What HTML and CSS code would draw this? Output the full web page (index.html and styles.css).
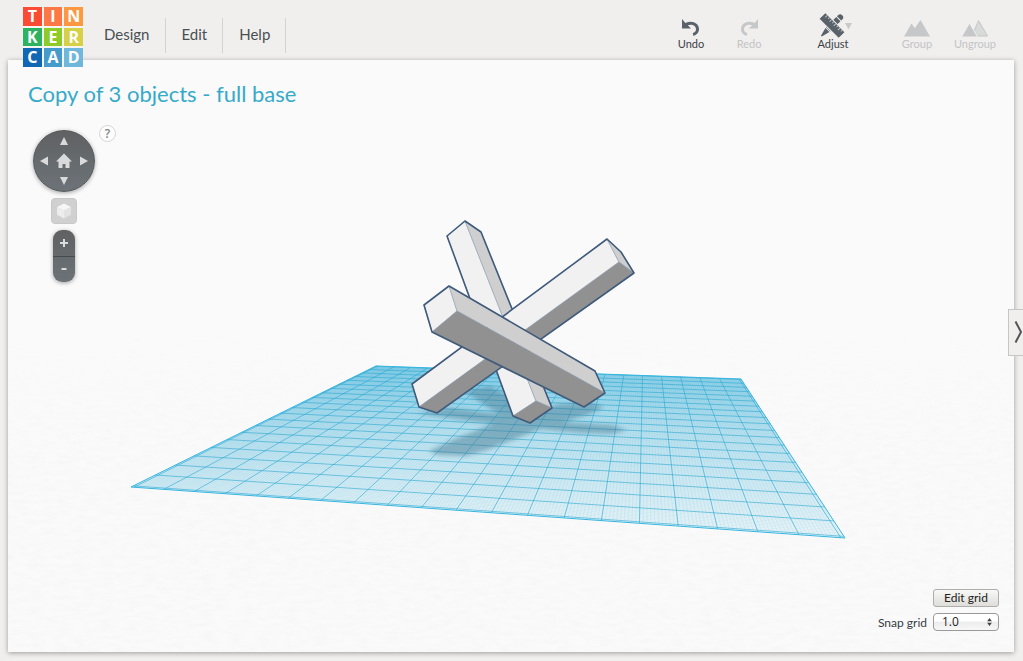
FILE: index.html
```html
<!DOCTYPE html>
<html lang="en">
<head>
<meta charset="utf-8">
<title>Tinkercad</title>
<link rel="stylesheet" href="styles.css">
</head>
<body>
<header class="topbar">
  <a class="logo" href="#" aria-label="Tinkercad">
    <span class="tile red">T</span><span class="tile coral">I</span><span class="tile orange">N</span>
    <span class="tile green">K</span><span class="tile lime">E</span><span class="tile yellow">R</span>
    <span class="tile navy">C</span><span class="tile blue">A</span><span class="tile sky">D</span>
  </a>
  <nav class="menu">
    <button type="button">Design</button>
    <button type="button">Edit</button>
    <button type="button">Help</button>
  </nav>
  <div class="tools">
    <div class="tool-group">
      <button type="button" class="tool">
        <svg width="34" height="25" viewBox="0 0 34 25"><path class="ink" d="M8 6v9.500h9l-3.200-3.300c4-1.500 8.200.3 8.200 4 0 1.800-1.300 3.500-3.200 3.900l.4 2.600c3.400-.5 5.800-3.300 5.800-6.700 0-6-7-9.200-13.600-6.100z"/></svg>
        Undo
      </button>
      <button type="button" class="tool" disabled>
        <svg width="34" height="25" viewBox="0 0 34 25"><path class="ink" d="M26 6v9.500h-9l3.200-3.300c-4-1.500-8.200.3-8.200 4 0 1.800 1.300 3.500 3.200 3.900l-.4 2.600c-3.400-.5-5.800-3.300-5.800-6.700 0-6 7-9.200 13.600-6.100z"/></svg>
        Redo
      </button>
    </div>
    <button type="button" class="tool">
      <svg width="40" height="25" viewBox="0 0 40 25">
        <g transform="translate(19 12.500) rotate(45)">
          <path class="ink" d="M-3-11.500a3 3 0 0 1 6 0v1.500h-6zM-3-9h6v14.500h-6zM-2.800 6.500h5.600L.6 15h-1.200z"/>
        </g>
        <g transform="translate(19 12.500) rotate(-45)">
          <path class="ink" stroke="#f0efee" d="M-4.500-14h9v28h-9z"/>
          <path class="ticks" d="M4-10.500H1M4-7.500H2M4-4.500H1M4-1.500H2M4 1.500H1M4 4.500H2M4 7.500H1M4 10.500H2"/>
        </g>
        <path fill="#c9c9c9" d="M32 10h7l-3.500 6.500z"/>
      </svg>
      Adjust
    </button>
    <div class="tool-group">
      <button type="button" class="tool" disabled>
        <svg width="34" height="25" viewBox="0 0 34 25"><path class="ink" d="M4 23.500l7.500-13 3.300 4.800L20.500 7l9.500 16.500z"/></svg>
        Group
      </button>
      <button type="button" class="tool" disabled>
        <svg width="34" height="25" viewBox="0 0 34 25"><path fill="#d8d9d9" stroke="#c5c7c8" d="M14 23L20.500 7.500l9 15.500z"/><path class="ink" stroke="#f0efee" d="M3.500 24l8-14 8 14z"/></svg>
        Ungroup
      </button>
    </div>
  </div>
</header>

<main class="workspace">
  <svg class="scene" viewBox="8 60 1006 592" preserveAspectRatio="xMidYMid slice" aria-hidden="true">
    <defs>
      <linearGradient id="plane-fill" gradientUnits="userSpaceOnUse" x1="0" y1="366" x2="0" y2="530">
        <stop offset="0" stop-color="#aadcec"/><stop offset=".4" stop-color="#cfe9f1"/><stop offset="1" stop-color="#eef6f8"/>
      </linearGradient>
      <linearGradient id="paper-fade" gradientUnits="userSpaceOnUse" x1="0" y1="330" x2="0" y2="460">
        <stop offset="0" stop-color="#fff" stop-opacity="0"/><stop offset="1" stop-color="#fff"/>
      </linearGradient>
      <mask id="paper-mask"><rect x="8" y="330" width="1006" height="330" fill="url(#paper-fade)"/></mask>
      <filter id="paper" x="0" y="0" width="1" height="1">
        <feTurbulence type="fractalNoise" baseFrequency=".07 .25" numOctaves="3" seed="4"/>
        <feColorMatrix values="0 0 0 0 .5  0 0 0 0 .5  0 0 0 0 .5  .1 0 0 0 -.035"/>
      </filter>
      <filter id="soft" x="-.1" y="-.2" width="1.2" height="1.4"><feGaussianBlur stdDeviation="2"/></filter>
    </defs>
    <g mask="url(#paper-mask)"><rect x="8" y="330" width="1006" height="330" filter="url(#paper)"/></g>
    <path class="plane" d="M376 366L741 379 845 538 131 487z"/>
    <path class="minor" id="minor-lines"/>
    <path class="major" id="major-lines"/>
    <path class="rim" d="M376 366L741 379 845 538 131 487z"/>
    <g class="shadow" filter="url(#soft)">
      <path d="M429 451L438 455 466 456 490 449 540 429 590 414 604 407 592 403 560 404 515 415 455 439z"/>
      <path d="M416 413L450 408 500 414 560 422 612 425 627 430 612 434 580 433 530 428 470 421z"/>
      <path d="M464 391L490 386 520 402 550 418 525 426 492 410z"/>
    </g>
    <g class="beam">
      <path class="light" d="M447 236L465 221 536 401 513 416z"/>
      <path class="mid" d="M465 221L481 232 552 408 536 401z"/>
      <path class="dark" d="M513 416L536 401 552 408 530 423z"/>
      <path class="outline" d="M447 236L465 221 481 232 552 408 530 423 513 416z"/>
    </g>
    <g class="beam">
      <path class="light" d="M607 239L619 262 419 407 412 384z"/>
      <path class="mid" d="M607 239L621 252 634 273 619 262z"/>
      <path class="dark" d="M619 262L634 273 437 413 419 407z"/>
      <path class="outline" d="M607 239L621 252 634 273 437 413 419 407 412 384z"/>
    </g>
    <g class="beam">
      <path class="light" d="M424 305L449 286 457 311 432 332z"/>
      <path class="mid" d="M449 286L595 371 605 393 457 311z"/>
      <path class="dark" d="M457 311L605 393 584 407 432 332z"/>
      <path class="outline" d="M424 305L449 286 595 371 605 393 584 407 432 332z"/>
    </g>
  </svg>

  <div class="hud">
    <h1 class="title">Copy of 3 objects - full base</h1>
    <div class="view-tools">
      <div class="view-column">
        <div class="compass">
          <button type="button" class="north" aria-label="Look up"><svg viewBox="0 0 10 10"><path d="M5 1l4 8H1z"/></svg></button>
          <button type="button" class="west" aria-label="Look left"><svg viewBox="0 0 10 10"><path d="M1 5l8-4.500v9z"/></svg></button>
          <button type="button" class="home" aria-label="Home view"><svg viewBox="0 0 16 16"><path d="M8 .5L16 8.500h-2.500V15h-4v-4h-3v4h-4V8.500H0z"/></svg></button>
          <button type="button" class="east" aria-label="Look right"><svg viewBox="0 0 10 10"><path d="M9 5L1 .5v9z"/></svg></button>
          <button type="button" class="south" aria-label="Look down"><svg viewBox="0 0 10 10"><path d="M5 9l4-8H1z"/></svg></button>
        </div>
        <button type="button" class="fit" aria-label="Fit view"><svg viewBox="0 0 16 16"><path fill="#f6f6f6" d="M8 .5l7 3.500-7 3.700L1 4z"/><path fill="#ededed" d="M1 4l7 3.700v7.800l-7-3.700z"/><path fill="#e3e3e3" d="M15 4L8 7.700v7.800l7-3.700z"/></svg></button>
        <div class="zoom">
          <button type="button" aria-label="Zoom in"><svg viewBox="0 0 10 10"><path d="M4 1h2v3h3v2H6v3H4V6H1V4h3z"/></svg></button>
          <button type="button" aria-label="Zoom out"><svg viewBox="0 0 10 10"><path d="M2.500 3h5v2h-5z"/></svg></button>
        </div>
      </div>
      <button type="button" class="help">?</button>
    </div>
  </div>

  <form class="grid-settings">
    <button type="button" class="edit-grid">Edit grid</button>
    <label for="snap">Snap grid</label>
    <span class="select-wrap">
      <select id="snap"><option>1.0</option></select>
      <svg width="5" height="8" viewBox="0 0 6 10"><path d="M3 0l3 4H0zM3 10L0 6h6z"/></svg>
    </span>
  </form>
</main>
<button type="button" class="drawer" aria-label="Open side panel"><svg width="9" height="24" viewBox="0 0 9 24"><path d="M1.500 1.500L7 12 1.500 22.500"/></svg></button>
<script src="scene.js"></script>
</body>
</html>
```
FILE: styles.css
```css
* { box-sizing: border-box; }

body {
  margin: 0;
  min-height: 100vh;
  display: flex;
  flex-direction: column;
  background: #f0efee;
  color: #4a4f53;
  font-family: Lato, sans-serif;
}

button {
  margin: 0;
  padding: 0;
  border: 0;
  background: none;
  color: inherit;
  font: inherit;
}

svg { display: block; }

.topbar {
  display: flex;
  align-items: flex-start;
  height: 60px;
  padding: 7px 19px 0 23px;
}

.logo {
  position: relative;
  z-index: 2;
  display: grid;
  grid-template-columns: repeat(3, 1fr);
  grid-auto-rows: 1fr;
  gap: 2px;
  width: 60px;
  height: 60px;
  background: #f5f5f2;
  color: #fff;
  font: 700 16px/18px "Open Sans", sans-serif;
  text-align: center;
  text-decoration: none;
}

.red { background: #fb4b33; }
.coral { background: #ff7744; }
.orange { background: #fd9742; }
.green { background: #2db35f; }
.lime { background: #8ecb28; }
.yellow { background: #d5d045; }
.navy { background: #1067b3; }
.blue { background: #469bcd; }
.sky { background: #6fb8dc; }

.menu {
  display: flex;
  gap: 1px;
  padding: 11px 0 0 6px;
}

.menu button {
  height: 35px;
  padding: 0 15px 3px;
  border-right: 1px solid #d4d4d3;
  font-size: 15px;
}

.tools {
  display: flex;
  gap: 26px;
  margin-left: auto;
  padding-top: 6px;
}

.tool-group { display: flex; }

.tool {
  display: flex;
  flex-direction: column;
  align-items: center;
  width: 58px;
  color: #3c4248;
  font-size: 11px;
  line-height: 12px;
}

.tool:disabled { color: #c3c4c5; }
.ink { fill: #596268; }
.ticks { stroke: #c0c4c6; }
.tool:disabled .ink { fill: #c5c7c8; }

.workspace {
  position: relative;
  flex: 1;
  margin: 0 9px 9px 8px;
  background: #fafafa;
  box-shadow: 0 1px 5px rgba(0, 0, 0, .35);
}

.scene {
  position: absolute;
  inset: 0;
  width: 100%;
  height: 100%;
}

.plane { fill: url(#plane-fill); }
.minor { fill: none; stroke: #35b1d8; stroke-width: .5px; opacity: .22; }
.major { fill: none; stroke: #2ba9d2; opacity: .6; }
.rim { fill: none; stroke: #35b5e0; }
.shadow { fill: #41758d; opacity: .45; }
.light { fill: #f1f1f1; }
.mid { fill: #cfcfcf; }
.dark { fill: #919191; }
.beam path { stroke: #8fa0b3; stroke-width: .6px; stroke-linejoin: round; }
.beam .outline { fill: none; stroke: #405b7b; stroke-width: 1.6px; }

.hud {
  position: relative;
  width: max-content;
  padding: 19px 20px;
}

.title {
  margin: 0;
  color: #35aac9;
  font-size: 22px;
  font-weight: 400;
  line-height: 30px;
}

.view-tools {
  display: flex;
  align-items: flex-start;
  gap: 4px;
  padding: 21px 0 0 5px;
}

.view-column {
  display: flex;
  flex-direction: column;
  align-items: center;
  gap: 6px;
}

.compass {
  display: grid;
  grid-template: repeat(3, 20px) / repeat(3, 20px);
  place-content: center;
  width: 62px;
  height: 62px;
  border: 1px solid #55595c;
  border-radius: 50%;
  background: linear-gradient(#606163, #6c7378);
  box-shadow: 0 1px 4px rgba(0, 0, 0, .35);
}

.compass button {
  display: grid;
  place-content: center;
}

.compass svg, .zoom svg {
  width: 10px;
  fill: #d9dadb;
}

.compass .home svg { width: 16px; }
.north { grid-area: 1 / 2; }
.west { grid-area: 2 / 1; }
.home { grid-area: 2 / 2; }
.east { grid-area: 2 / 3; }
.south { grid-area: 3 / 2; }

.fit {
  display: grid;
  place-content: center;
  width: 26px;
  height: 26px;
  border: 1px solid #c8c8c8;
  border-radius: 4px;
  background: #d0d0d0;
}

.fit svg { width: 16px; }

.zoom {
  width: 22px;
  border-radius: 9px;
  background: linear-gradient(#606163, #6c7378);
  box-shadow: 0 1px 4px rgba(0, 0, 0, .35);
}

.zoom button {
  display: grid;
  place-content: center;
  width: 100%;
  height: 26px;
}

.zoom button + button { border-top: 1px solid #46494b; }

.help {
  width: 17px;
  height: 17px;
  margin-top: -5px;
  border: 1px solid #d6d6d6;
  border-radius: 50%;
  background: #fdfdfd;
  color: #858585;
  font: 600 12px/15px "Open Sans", sans-serif;
}

.grid-settings {
  position: absolute;
  right: 15px;
  bottom: 21px;
  display: grid;
  grid-template-columns: auto 66px;
  gap: 6px;
  align-items: center;
  color: #363b45;
  font-size: 12px;
}

.edit-grid {
  grid-column: 2;
  height: 18px;
  border: 1px solid #adadab;
  border-radius: 3px;
  background: linear-gradient(#f8f8f6, #deddd8);
  color: #222;
  line-height: 14px;
}

.select-wrap {
  position: relative;
  height: 18px;
}

.select-wrap select {
  width: 100%;
  height: 18px;
  padding: 0 8px;
  border: 1px solid #999;
  border-radius: 4px;
  appearance: none;
  background: linear-gradient(#fff, #fff 45%, #ececec 50%, #f8f8f8);
  color: #222;
  font: 12px/16px "Open Sans", sans-serif;
}

.select-wrap svg {
  position: absolute;
  top: 5px;
  right: 7px;
  fill: #444;
  pointer-events: none;
}

.drawer {
  position: absolute;
  top: calc(50vh - 22px);
  right: 0;
  display: grid;
  place-content: center end;
  width: 15px;
  height: 47px;
  border: 1px solid #c6c6c6;
  border-right: 0;
  background: #f0efee;
}

.drawer path { fill: none; stroke: #555; stroke-width: 2px; }
```
FILE: scene.js
```js
// Projects the square work plane onto its four on-screen corners.
const corners = [[131, 487], [845, 538], [741, 379], [376, 366]];
const CELLS = 20;
const MARGIN = 0.1;

const [[x0, y0], [x1, y1], [x2, y2], [x3, y3]] = corners;
const dx1 = x1 - x2, dx2 = x3 - x2, dx3 = x0 - x1 + x2 - x3;
const dy1 = y1 - y2, dy2 = y3 - y2, dy3 = y0 - y1 + y2 - y3;
const den = dx1 * dy2 - dx2 * dy1;
const g = (dx3 * dy2 - dx2 * dy3) / den;
const h = (dx1 * dy3 - dy1 * dx3) / den;

function project(u, v) {
  const w = g * u + h * v + 1;
  const x = (x1 - x0 + g * x1) * u + (x3 - x0 + h * x3) * v + x0;
  const y = (y1 - y0 + g * y1) * u + (y3 - y0 + h * y3) * v + y0;
  return (x / w).toFixed(2) + " " + (y / w).toFixed(2);
}

function lines(step) {
  let d = "";
  for (let i = 0; i <= CELLS * step; i++) {
    const t = (i / step + MARGIN) / (CELLS + 2 * MARGIN);
    d += `M${project(t, 0)}L${project(t, 1)}M${project(0, t)}L${project(1, t)}`;
  }
  return d;
}

document.getElementById("minor-lines").setAttribute("d", lines(10));
document.getElementById("major-lines").setAttribute("d", lines(1));
```
